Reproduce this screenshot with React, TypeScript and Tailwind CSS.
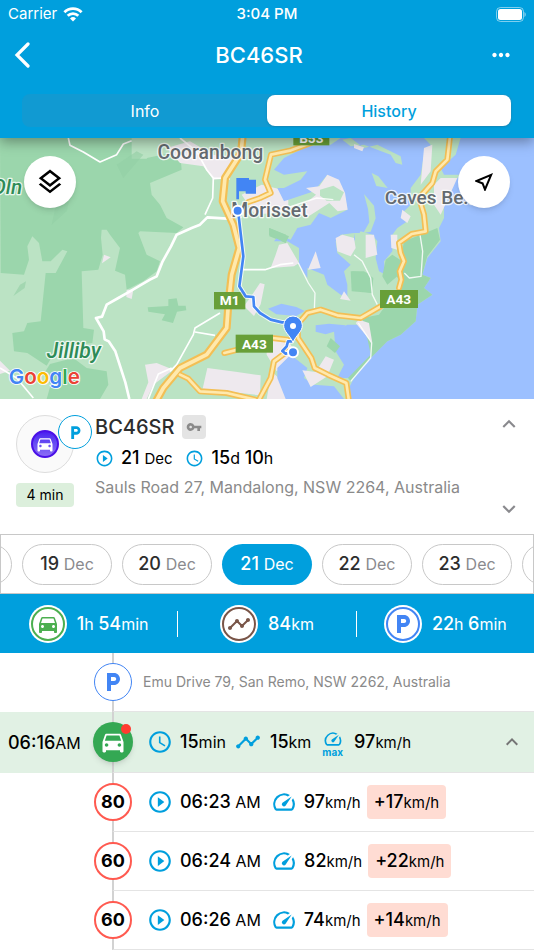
import React, { useState } from 'react';
import {
  MdDirectionsCar,
  MdTimeline,
  MdPlayCircleOutline,
  MdSchedule,
  MdVpnKey,
  MdOutlineLayers,
  MdOutlineNearMe,
  MdLocalParking,
  MdOutlineSpeed,
  MdExpandLess,
  MdExpandMore,
  MdMoreHoriz,
} from 'react-icons/md';

interface SpeedEvent {
  limit: number;
  time: string;
  speed: number;
  over: number;
}

const days = [18, 19, 20, 21, 22, 23, 24];

const events: SpeedEvent[] = [
  { limit: 80, time: '06:23', speed: 97, over: 17 },
  { limit: 60, time: '06:24', speed: 82, over: 22 },
  { limit: 60, time: '06:26', speed: 74, over: 14 },
];

function Value({ value, unit, small }: { value: string | number; unit: string; small?: boolean }) {
  return (
    <span className="whitespace-nowrap text-lg font-medium">
      {value}
      <span className={small ? 'text-[15px] font-normal' : 'text-base font-normal'}>{unit}</span>
    </span>
  );
}

function StatusBar() {
  return (
    <div className="grid h-7 grid-cols-3 items-center px-2 text-[15px]">
      <div className="flex items-center gap-[6px]">
        <span>Carrier</span>
        <svg viewBox="0 0 20 15" className="h-[15px] w-5" fill="none" stroke="currentColor" strokeWidth="2.8">
          <path d="M1.4 5.2a12.2 12.2 0 0 1 17.2 0" />
          <path d="M4.7 8.8a7.5 7.5 0 0 1 10.6 0" />
          <path d="M10 14.4 7 11.4a4.3 4.3 0 0 1 6 0z" fill="currentColor" stroke="none" />
        </svg>
      </div>
      <span className="text-center font-medium">3:04 PM</span>
      <svg viewBox="0 0 32 15" className="h-[15px] w-8 justify-self-end" fill="none">
        <rect x="2.5" y="0.5" width="27" height="14" rx="4" stroke="#fff" strokeOpacity="0.5" />
        <rect x="4" y="2" width="24" height="11" rx="2.5" fill="#fff" />
        <path d="M30.5 5v5c1.6-.8 1.6-4.2 0-5z" fill="#fff" fillOpacity="0.6" />
      </svg>
    </div>
  );
}

function Header() {
  const [tab, setTab] = useState('History');

  return (
    <header className="relative z-10 bg-[#009fdd] pb-[11px] text-white shadow-[0_4px_12px_rgba(0,0,0,0.35)]">
      <StatusBar />
      <div className="flex h-[54px] items-center justify-between pr-5 pl-[14px]">
        <button type="button" aria-label="Back">
          <svg viewBox="0 0 16 28" className="h-7 w-4" fill="none" stroke="currentColor" strokeWidth="3.2" strokeLinecap="round">
            <path d="M14 3 3 14l11 11" />
          </svg>
        </button>
        <h1 className="text-[22px] font-medium">BC46SR</h1>
        <button type="button" aria-label="More">
          <MdMoreHoriz className="size-[26px]" />
        </button>
      </div>
      <div className="mx-[22px] mt-3 flex h-[33px] rounded-lg bg-[#119ad2] p-px">
        {['Info', 'History'].map((name) => (
          <button
            key={name}
            type="button"
            onClick={() => setTab(name)}
            className={
              tab === name
                ? 'flex-1 rounded-lg bg-white font-medium text-[#009fdd] shadow-sm'
                : 'flex-1 rounded-lg'
            }
          >
            {name}
          </button>
        ))}
      </div>
    </header>
  );
}

function MapDrawing() {
  return (
    <svg viewBox="0 0 1602 783" preserveAspectRatio="xMidYMid slice" className="block h-full w-full">
      <rect width="1602" height="783" fill="#bbe3c4" />

      {/* forest */}
      <g fill="#9bd6ac">
        <path d="M0 0h395l45 60 100-20 5 55-95 40 5 35 25 30 20 40 50 28-20 17-110-5-5 5 25 65 40 20-10 30-40 30-50 25-5-45-30-12 15-68-30-40-10-15-15 0-2 25 5 50-13 45-50 5 5 170 32 5-5 40-75 10-50 38-12 20-58-38-40-5-5-55 35-5 10-25 40-5 15-145 30 0 35-65-15-5-35 35-25 0-10-55-20-20-15 30 5 40-15 45-70-5z" />
        <path d="M150 678l70-18 40 30 60 10 5 40-25 43H140l12-43-22-30z" />
        <path d="M443 508l62-4 0-20 25-3 5 22 22 0 2 14-28 4-12 34-34-8 10-18-50-8z" />
        <path d="M808 270l50 20 0 25-50-20z" />
        <path d="M1052 400l40 0 28 20-5 45-60-5z" />
      </g>
      <path d="M395 0h80l-35 62-45 0z" fill="#bbe3c4" />
      <path d="M170 190l40-10-10 40-45 40zM60 440l18-10-4 20-34 24zM350 80l60-40 20 10-60 70z" fill="#93cfa5" opacity="0.6" />

      {/* built-up areas */}
      <g fill="#eee9ee">
        <path d="M500 30l70-20 70 40 60 10-10 60-50 5-30-40-70-10z" />
        <path d="M725 170l60-30 80 20 0 60-100 10z" />
        <path d="M380 455l20 0-5 28-16-6zM312 350l20 8-26 18z" />
        <path d="M435 680l35-5 50 20-60 45-20 43-15 0 20-50z" />
        <path d="M622 690l90 12 70 10-2 60-172-20z" />
        <path d="M750 480l30-45 14 4-12 60-20 35-30-30z" />
        <path d="M0 668l30 30-30 10z" />
        <path d="M800 600l60 0 30 50-60 50-30-50zM815 700l30 30 20 53h-65z" />
      </g>

      <g transform="translate(792 0)">
        {/* lake and inlets */}
        <g fill="#9cc0ff">
          <path d="M130 25l70-5 30-20h250l20 20-20 30-10 60-30 40 0 50-25 25 15 25-30 20-15 20 0 50-25 30 5 40-20-10-10-40 5-50-15-20-35-10-20 30 0-25-40 5-15 20 5 35 40 35-20 20 10 40 0 40-20-10-40-30-10-30-50-20 0 30-25-40 0-50-35-20-40 0 15-20 35 15 20-35 40-10 25-35 35 15 50-25-10-55-50-50-40 50-90 30-20-40 20 0 50-25 20-25-70 10-30-15 30-35z" />
          <path d="M590 0l-15 50-45 40 10 20 50 0-30 30-20 20 0 80-15 30 5 40-40 50-15 50 25 10-20 30 25 20-45 30-5 50-45 40-40 20-50 50-50 60-20 40-2 23h562V0z" />
          <path d="M210 580l40-20 40 0 20 40 15 25-5 35-60 60-40 0 20-40-25-40z" />
          <path d="M40 690l40-40 50 40-10 30 30 20 60 5 30 38H65L40 720z" />
          <path d="M155 562l40-5 50 5-20 15-40 12-30-8zM12 512l40-15 45 10 25 12-25 15-60-5z" />
        </g>
        {/* headlands and islands */}
        <g fill="#bbe3c4">
          <path d="M300 168l30 35 5 38-15 40-22 4 18-32-4-40z" />
          <path d="M323 105l20 10 28 35-34-6z" />
          <path d="M260 0l40 30 40-10 70 35 5 25-20-5-15-25-80-30-40 5-25-20z" />
          <path d="M270 285l20 0 20 20-10 45-20-10z" />
        </g>
        <g fill="#9bd6ac">
          <path d="M420 310l50-20 50-20 8 35-38 50-15 55 25 10-20 30 25 20-45 30-5 50-45 40-40 20-50 50-60 70-8-10 68-70-10-50-15-60 50-10 50-70 20-20-20-30 10-25z" />
          <path d="M385 350l30 20-10 40-35 30-15-25 10-50zM265 400l50 5 10 60-60-10z" />
          <path d="M200 600l28 25-15 20-25-20z" />
          <path d="M15 270l60 25-10 20-50-25z" />
        </g>
        <g fill="#eee9ee">
          <path d="M45 320l25-5 35 60-15 10-70 5 15-40zM155 340l15 50-38 5zM190 110l35 15 18 40 8 50-30 5-25-25-70 45-30-20 60-50-30-20 40-5z" />
          <path d="M215 300l20-10 35 10 5 30-15 25-40-15zM305 290l25 0 10 60-35 10zM480 30l25-10-5 80-30 40zM415 215l25 20-10 20-20-15zM380 290l20 0 0 45-18-5z" />
          <path d="M270 18l30 10-5 12-25-10zM530 120l50 0-50 110-20-30 0-60zM285 545l30 10 10 60-50-60zM185 655l25 10-20 50-50 32-25-50 40 5zM240 460l20 28-32-5z" />
        </g>
        <path d="M168 155l40-12 32 20-12 25-40 0-20-15z" fill="#bbe3c4" />
      </g>

      {/* minor roads */}
      <g fill="none" stroke="#fff" strokeLinejoin="round">
        <path d="M388 783l-12-50-30-93-20-30-12-6-3-24-23-40 18-4 14-36 35-20 35-20 60-35 20-10 18-45 25-45 17-35 45-20 25-10 22-22 60 4" strokeWidth="8" />
        <path d="M205 0l5 22 40 20 50 30 50-22 20-32 25-10M540 0l50 40 30 55 20 25 50 2M640 120l-2 60-23 50" strokeWidth="5" />
        <path d="M660 525l-75 45-5 20-50 90-20 20M585 582l60 10M725 395l70 0 45-15 40-5M445 783l30-75 40-18M0 690l50 30 50 60" strokeWidth="5" />
        <path d="M895 375l30 60 20 30-2 50M1062 350l25 20 25 50 5 50 15 30M1260 290l8 50-5 75-35 5-15-15M1075 555l40 60-3 45-60 70M860 210l90-30 50 5" strokeWidth="4" opacity="0.85" />
      </g>

      {/* highways: casing, then fill */}
      {[
        { color: '#f3bf55', wide: 24, narrow: 18 },
        { color: '#ffe9ad', wide: 11, narrow: 8 },
      ].map((layer) => (
        <g key={layer.color} fill="none" stroke={layer.color} strokeLinejoin="round" strokeLinecap="round">
          <path
            d="M728-5l-5 50-48 75-7 70 32 70 18 70-23 80-10 90-5 70-60 80-80 40-50 60-22 40"
            strokeWidth={layer.wide}
          />
          <path
            d="M1197 450l7-25-5-25 13-30-10-25-5-30 38-27 42-8-5-50-15-50 40-45 10-35 35-35 8-70M1142 505l-60 35-70-8-50-17-40 10-30 35 2 40 40 60 10 30 40 20 55 25 8 55M862 640l-40 30-10 50-35 65M540 710l25 12 35 38 80 5 85 20M673 645l40-10M817 600l45 5M745 192l35-12 32-15-17-40 18-75 60-13 60-22"
            strokeWidth={layer.narrow}
          />
        </g>
      ))}

      {/* place names */}
      <g
        fontFamily="Roboto, sans-serif"
        fontWeight="500"
        fill="#646b71"
        stroke="#fff"
        strokeWidth="8"
        strokeOpacity="0.8"
        strokeLinejoin="round"
        paintOrder="stroke"
      >
        <text x="631" y="62" textAnchor="middle" fontSize="58">Cooranbong</text>
        <text x="694" y="237" fontSize="58">Morisset</text>
        <text x="1154" y="199" fontSize="57">Caves Be...</text>
        <text x="140" y="661" fontSize="64" fontStyle="italic" fill="#2e8b57">Jilliby</text>
        <text x="-24" y="167" fontSize="62" fontStyle="italic" fill="#2e8b57">Oln</text>
      </g>

      {/* route shields */}
      <g fontFamily="Roboto, sans-serif" fontSize="41" fontWeight="700" fill="#fff" textAnchor="middle">
        <rect x="642" y="462" width="94" height="52" fill="#689f38" />
        <text x="689" y="502">M1</text>
        <rect x="707" y="590" width="112" height="54" fill="#689f38" />
        <text x="763" y="632">A43</text>
        <rect x="1140" y="456" width="114" height="54" fill="#689f38" />
        <text x="1196" y="497">A43</text>
        <rect x="880" y="-30" width="108" height="52" fill="#689f38" />
        <text x="934" y="14">B53</text>
      </g>

      {/* driven route */}
      <g fill="none" strokeLinejoin="round" strokeLinecap="round">
        <path d="M714 217l16 138-12 90 19 30 23 2 2 28 18 20 32 20 34 8 12 0M876 610l-12 0-4 15-13 14 10 8 22-4" stroke="#fff" strokeWidth="14" strokeOpacity="0.8" />
        <path d="M714 217l16 138-12 90 19 30 23 2 2 28 18 20 32 20 34 8 12 0M876 610l-12 0-4 15-13 14 10 8 22-4" stroke="#4285f4" strokeWidth="8" />
      </g>
      <g fill="#4285f4" stroke="#fff">
        <circle cx="713" cy="218" r="15" strokeWidth="6" />
        <circle cx="879" cy="643" r="15" strokeWidth="6" />
        <path d="M709 120h38v5h21v42h-31v-7h-20v24h-8z" stroke="none" />
        <path d="M879 614c-9-23-28-32-28-52a28 28 0 0 1 56 0c0 20-19 29-28 52z" strokeWidth="3" />
        <circle cx="879" cy="564" r="9" fill="#fff" stroke="none" />
      </g>

      <text x="26" y="739" fontFamily="Inter, sans-serif" fontSize="62" fontWeight="600" stroke="#fff" strokeWidth="5" paintOrder="stroke">
        <tspan fill="#4285f4">G</tspan>
        <tspan fill="#ea4335">o</tspan>
        <tspan fill="#fbbc05">o</tspan>
        <tspan fill="#4285f4">g</tspan>
        <tspan fill="#34a853">l</tspan>
        <tspan fill="#ea4335">e</tspan>
      </text>
    </svg>
  );
}

function MapPanel() {
  const button = 'absolute top-[18px] flex size-[52px] items-center justify-center rounded-full bg-white shadow-md';

  return (
    <section className="relative h-[261px] shrink-0 overflow-hidden">
      <MapDrawing />
      <button type="button" aria-label="Map layers" className={`${button} left-6`}>
        <MdOutlineLayers className="size-[30px]" />
      </button>
      <button type="button" aria-label="My location" className={`${button} right-6`}>
        <MdOutlineNearMe className="size-6" />
      </button>
    </section>
  );
}

function VehicleCard() {
  return (
    <section className="flex h-[135px] shrink-0 items-start pt-4 pr-3 pl-4">
      <div className="w-[79px] shrink-0">
        <div className="relative flex size-[58px] items-center justify-center rounded-full border border-[#dddddd] bg-[#fafafa]">
          <span className="flex size-7 items-center justify-center rounded-full border-2 border-[#4a10e8] bg-linear-to-b from-[#4b1df0] to-[#8c6cf5] text-white">
            <MdDirectionsCar className="size-5" />
          </span>
          <span className="absolute -top-px left-[41px] flex size-[34px] items-center justify-center rounded-full border border-[#009fdd] bg-white text-[#009fdd]">
            <MdLocalParking className="size-[17px]" />
          </span>
        </div>
        <div className="mt-[10px] h-6 w-[58px] rounded bg-[#dcefdc] text-center text-sm leading-6">4 min</div>
      </div>
      <div className="min-w-0 flex-1">
        <div className="flex h-6 items-center gap-2">
          <h2 className="text-xl font-medium text-[#2d2d2d]">BC46SR</h2>
          <span className="flex size-6 items-center justify-center rounded bg-[#e4e4e4] text-[#8a8a8a]">
            <MdVpnKey className="size-4" />
          </span>
        </div>
        <div className="mt-[5px] flex h-7 items-center">
          <MdPlayCircleOutline className="size-[19px] text-[#009fdd]" />
          <span className="ml-[7px] text-lg font-medium">
            21 <span className="text-[15px] font-normal">Dec</span>
          </span>
          <MdSchedule className="ml-3 size-[19px] text-[#009fdd]" />
          <span className="ml-2 text-lg font-medium">
            15<span className="text-base font-normal">d</span> 10<span className="text-base font-normal">h</span>
          </span>
        </div>
        <p className="mt-[3px] whitespace-nowrap text-base text-[#8a8a8a]">Sauls Road 27, Mandalong, NSW 2264, Australia</p>
      </div>
      <div className="flex flex-col justify-between self-stretch pb-3 text-[#8a8a8e]">
        <button type="button" aria-label="Previous">
          <MdExpandLess className="-mt-1 size-[26px]" />
        </button>
        <button type="button" aria-label="Next">
          <MdExpandMore className="size-[26px]" />
        </button>
      </div>
    </section>
  );
}

function DayPicker() {
  const [selected, setSelected] = useState(21);

  return (
    <nav className="flex h-[60px] shrink-0 items-center justify-center gap-[10px] overflow-hidden border border-[#c8c8c8]">
      {days.map((day) => (
        <button
          key={day}
          type="button"
          onClick={() => setSelected(day)}
          className={
            day === selected
              ? 'h-[41px] w-[90px] shrink-0 rounded-full bg-[#009fdd] text-lg font-medium text-white'
              : 'h-[41px] w-[90px] shrink-0 rounded-full border border-[#c8c8c8] text-lg font-medium text-[#2d2d2d]'
          }
        >
          {day}{' '}
          <span className={day === selected ? 'text-base font-normal' : 'text-base font-normal text-[#8a8a8e]'}>Dec</span>
        </button>
      ))}
    </nav>
  );
}

function Stat({ color, icon, children }: { color: string; icon: React.ReactNode; children: React.ReactNode }) {
  return (
    <div className="flex items-center justify-center gap-[10px]">
      <span className="rounded-full bg-white p-[2px]">
        <span className={`flex size-[34px] items-center justify-center rounded-full border-2 ${color}`}>{icon}</span>
      </span>
      <span className="whitespace-nowrap">{children}</span>
    </div>
  );
}

function Totals() {
  return (
    <section className="grid h-[59px] shrink-0 grid-cols-[1fr_1px_1fr_1px_1fr] items-center bg-[#009fdd] text-white">
      <Stat color="border-[#4caf50] text-[#4caf50]" icon={<MdDirectionsCar className="size-6" />}>
        <Value value="1" unit="h" /> <Value value="54" unit="min" />
      </Stat>
      <span className="h-[26px] bg-white" />
      <Stat color="border-[#795548] text-[#795548]" icon={<MdTimeline className="size-6" />}>
        <Value value="84" unit="km" />
      </Stat>
      <span className="h-[26px] bg-white" />
      <Stat color="border-[#4285f4] text-[#4285f4]" icon={<MdLocalParking className="size-6" />}>
        <Value value="22" unit="h" /> <Value value="6" unit="min" />
      </Stat>
    </section>
  );
}

function Timeline() {
  const body = 'flex flex-1 items-center border-b border-b-[#e4e4e4] border-l-2 border-l-[#d2d2d2]';

  return (
    <ul className="flex flex-1 flex-col">
      <li className="flex min-h-14 flex-1">
        <div className="w-28 shrink-0" />
        <div className={body}>
          <span className="-ml-5 flex size-[38px] shrink-0 items-center justify-center rounded-full border border-[#4285f4] bg-white text-[#4285f4]">
            <MdLocalParking className="size-6" />
          </span>
          <span className="ml-[11px] text-sm whitespace-nowrap text-[#8a8a8a]">Emu Drive 79, San Remo, NSW 2262, Australia</span>
        </div>
      </li>
      <li className="flex min-h-14 flex-1 bg-[#e1f1e4]">
        <div className="flex w-28 shrink-0 items-center pl-2">
          <Value value="06:16" unit="AM" />
        </div>
        <div className={`${body} pr-[10px]`}>
          <span className="relative -ml-[21px] flex size-10 shrink-0 items-center justify-center rounded-full bg-[#34a853] text-white shadow-md">
            <MdDirectionsCar className="size-7" />
            <span className="absolute top-[2px] right-[2px] size-[10px] rounded-full bg-[#ff3b30]" />
          </span>
          <MdSchedule className="ml-[14px] mr-[7px] size-[26px] shrink-0 text-[#009fdd]" />
          <Value value={15} unit="min" />
          <MdTimeline className="mx-[9px] size-[26px] shrink-0 text-[#009fdd]" />
          <Value value={15} unit="km" />
          <span className="mx-[11px] flex flex-col items-center text-[#009fdd]">
            <MdOutlineSpeed className="size-5" />
            <span className="text-[10px] leading-[6px] font-bold">max</span>
          </span>
          <Value value={97} unit="km/h" small />
          <button type="button" aria-label="Collapse trip" className="ml-auto text-[#757575]">
            <MdExpandLess className="size-6" />
          </button>
        </div>
      </li>
      {events.map((event) => (
        <li key={event.time} className="flex min-h-14 flex-1">
          <div className="w-28 shrink-0" />
          <div className={body}>
            <span className="-ml-5 flex size-[38px] shrink-0 items-center justify-center rounded-full border-2 border-[#ff5a50] bg-white text-lg font-bold">
              {event.limit}
            </span>
            <MdPlayCircleOutline className="ml-[15px] mr-[7px] size-[26px] shrink-0 text-[#009fdd]" />
            <Value value={event.time} unit=" AM" />
            <MdOutlineSpeed className="ml-[10px] mr-[7px] size-[26px] shrink-0 text-[#009fdd]" />
            <Value value={event.speed} unit="km/h" small />
            <span className="ml-[6px] flex h-[34px] items-center rounded bg-[#ffdcd3] px-[7px]">
              <Value value={`+${event.over}`} unit="km/h" small />
            </span>
          </div>
        </li>
      ))}
    </ul>
  );
}

export default function App() {
  return (
    <div className="flex min-h-screen flex-col overflow-hidden bg-white font-[Inter,sans-serif] text-black">
      <Header />
      <MapPanel />
      <VehicleCard />
      <DayPicker />
      <Totals />
      <Timeline />
    </div>
  );
}
